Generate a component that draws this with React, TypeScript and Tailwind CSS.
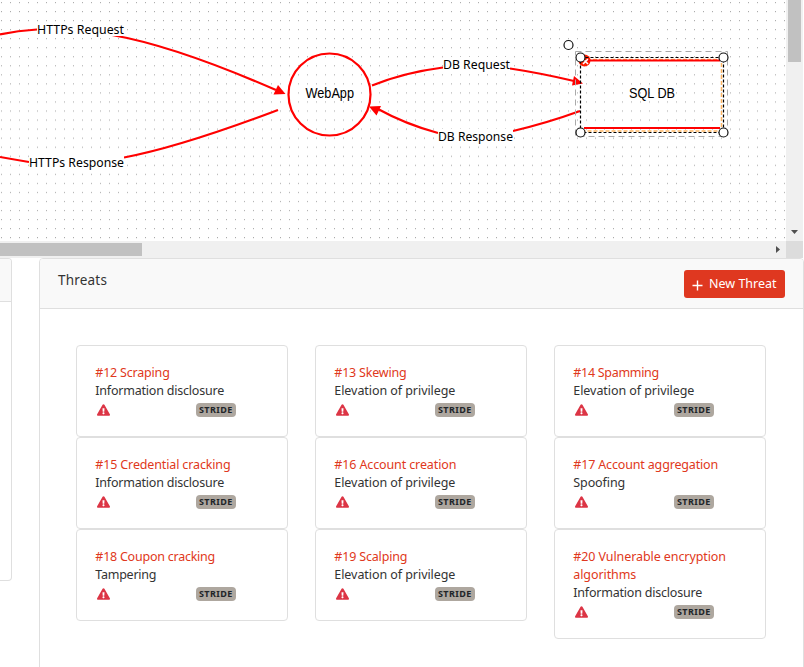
import React from "react";

type Threat = { title: string; kind: string; tracking: string };

const kindTracking: Record<string, string> = {
  "Information disclosure": "tracking-[-0.21px]",
  "Elevation of privilege": "tracking-[-0.06px]",
  Spoofing: "tracking-[-0.1px]",
  Tampering: "tracking-[-0.26px]",
};

const threats: Threat[] = [
  { title: "#12 Scraping", kind: "Information disclosure", tracking: "tracking-[-0.2px]" },
  { title: "#13 Skewing", kind: "Elevation of privilege", tracking: "tracking-[-0.2px]" },
  { title: "#14 Spamming", kind: "Elevation of privilege", tracking: "tracking-[-0.3px]" },
  { title: "#15 Credential cracking", kind: "Information disclosure", tracking: "tracking-[-0.14px]" },
  { title: "#16 Account creation", kind: "Elevation of privilege", tracking: "tracking-[-0.12px]" },
  { title: "#17 Account aggregation", kind: "Spoofing", tracking: "tracking-[-0.16px]" },
  { title: "#18 Coupon cracking", kind: "Tampering", tracking: "tracking-[-0.24px]" },
  { title: "#19 Scalping", kind: "Elevation of privilege", tracking: "tracking-[-0.17px]" },
  { title: "#20 Vulnerable encryption algorithms", kind: "Information disclosure", tracking: "tracking-[-0.09px]" },
];

function WarningIcon() {
  return (
    <svg width="13" height="12" viewBox="0 0 576 512" className="ml-[2px] mt-[4px] text-[#dc3545]">
      <path fill="currentColor" d="M569.517 440.013C587.975 472.007 564.806 512 527.94 512H48.054c-36.937 0-59.999-40.055-41.577-71.987L246.423 23.985c18.467-32.009 64.72-31.951 83.154 0l239.94 416.028zM288 354c-25.405 0-46 20.595-46 46s20.595 46 46 46 46-20.595 46-46-20.595-46-46-46zm-43.673-165.346l7.418 136c.347 6.364 5.609 11.346 11.982 11.346h48.546c6.373 0 11.635-4.982 11.982-11.346l7.418-136c.375-6.874-5.098-12.654-11.982-12.654h-63.383c-6.884 0-12.356 5.78-11.981 12.654z" />
    </svg>
  );
}

function ThreatCard({ threat }: { threat: Threat }) {
  return (
    <article className="w-[212px] self-start rounded-[4px] border border-[#dfdfdf] bg-white px-[18px] py-[18px] text-[12.5px] leading-[18px]">
      <p className={`pl-[0.3px] text-[#df3820] ${threat.tracking}`}>{threat.title}</p>
      <p className={`pl-[0.3px] text-[#333] ${kindTracking[threat.kind]}`}>{threat.kind}</p>
      <div className="flex h-[18px] items-start">
        <WarningIcon />
        <span className="ml-[86px] mt-[3px] h-[14px] w-[40px] rounded-[4px] bg-[#aea79f] pl-[3px] text-[9px] font-bold leading-[14px] tracking-[0.4px] text-[#212529]">
          STRIDE
        </span>
      </div>
    </article>
  );
}

function Handle({ x, y }: { x: number; y: number }) {
  return <circle cx={x} cy={y} r="4.5" fill="#fff" stroke="#111" strokeWidth="1.2" />;
}

function Diagram() {
  const label = { fontSize: 13, fill: "#000", lengthAdjust: "spacingAndGlyphs" as const };
  return (
    <svg width="786" height="241" className="block bg-white">
      <defs>
        <pattern id="grid" x="1" y="2" width="9" height="9.04" patternUnits="userSpaceOnUse">
          <rect width="1" height="1.1" fill="#aaa" />
        </pattern>
      </defs>
      <rect width="786" height="241" fill="url(#grid)" />
      <g fill="none" stroke="#f00" strokeWidth="2.2">
        <path d="M0 34.5Q18 30.5 37 29.5M112 35Q175 46 276 90" />
        <path d="M0 157Q14 159.5 29 162M124 157.5Q180 147 278 110" />
        <path d="M372 85.500Q404 72.500 443 67.500M510 68.500Q540 73 574 81" />
        <path d="M378 109Q405 124 438 133M513 131Q547 123 580 111" />
        <circle cx="329.500" cy="94.500" r="41" />
      </g>
      <g fill="#f00">
        <path d="M285.500 94L273.500 94.500L278 85Z" />
        <path d="M369 106.500L381 106L376.500 115.500Z" />
        <path d="M583 83.500L572 85.500L574 76Z" />
      </g>
      <g fill="#fff">
        <rect x="37" y="22" width="87" height="14" />
        <rect x="29" y="155" width="95" height="14" />
        <rect x="443" y="57" width="67" height="14" />
        <rect x="438" y="129" width="75" height="14" />
      </g>
      <g>
        <text x="37" y="34" textLength="87" {...label}>HTTPs Request</text>
        <text x="29" y="167" textLength="95" {...label}>HTTPs Response</text>
        <text x="443" y="69" textLength="67" {...label}>DB Request</text>
        <text x="438" y="141" textLength="75" {...label}>DB Response</text>
      </g>
      <g className="font-['Liberation_Sans',sans-serif]" fill="#000" fontSize="14">
        <text x="305.500" y="98" textLength="48.500" lengthAdjust="spacingAndGlyphs">WebApp</text>
        <text x="629" y="98" textLength="46" lengthAdjust="spacingAndGlyphs">SQL DB</text>
      </g>
      <rect x="575.500" y="51.500" width="152" height="85" fill="none" stroke="#aaa" strokeDasharray="6 4" />
      <path d="M581 59.500H721.500V131H581" fill="none" stroke="#feb663" strokeWidth="1.500" strokeDasharray="4 2" />
      <circle cx="584.500" cy="60.500" r="6" fill="#ff1d00" />
      <path d="M583 59L588 64M588 59L583 64" stroke="#fff" strokeWidth="1.600" />
      <path d="M588 60.500H720M584 128H720" stroke="#f00" strokeWidth="2.200" />
      <rect x="580.500" y="57.500" width="143" height="75" fill="none" stroke="#000" strokeWidth="1.200" strokeDasharray="3 2" />
      <Handle x={568.5} y={45} />
      <Handle x={580.5} y={57.5} />
      <Handle x={723.5} y={57.5} />
      <Handle x={580.5} y={132.5} />
      <Handle x={723.5} y={132.5} />
    </svg>
  );
}

export default function App() {
  return (
    <main className="flex h-[667px] w-[804px] flex-col overflow-hidden bg-white font-['Noto_Sans',sans-serif]">
      <section className="h-[258px] shrink-0">
        <div className="flex h-[241px]">
          <Diagram />
          <div className="flex w-[17px] flex-col items-center justify-between bg-[#f0f0f0]">
            <div className="h-[62px] w-[13px] bg-[#c1c1c1]" />
            <svg width="7" height="4" className="mb-[7px]"><path d="M0 0H7L3.500 4Z" fill="#505050" /></svg>
          </div>
        </div>
        <div className="flex h-[17px] w-[803px] items-center bg-[#f0f0f0]">
          <div className="h-[13px] w-[142px] bg-[#c1c1c1]" />
          <svg width="4" height="7" className="ml-auto mr-[6px]"><path d="M0 0V7L4 3.500Z" fill="#505050" /></svg>
          <div className="h-[17px] w-[17px] bg-[#dcdcdc]" />
        </div>
      </section>
      <div className="flex min-h-0 flex-1">
        <aside className="h-[323px] w-[12px] shrink-0 rounded-r-[4px] border border-l-0 border-[#dfdfdf]">
          <div className="h-[43px] rounded-tr-[3px] border-b border-[#dfdfdf] bg-[#f9f9f9]" />
        </aside>
        <section className="ml-[27px] h-[460px] w-[765px] shrink-0 rounded-[4px] border border-[#dfdfdf]">
          <header className="flex h-[50px] items-start justify-between rounded-t-[3px] border-b border-[#dfdfdf] bg-[#f9f9f9] pl-[18px] pr-[18px]">
            <h2 className="mt-[10px] text-[13.5px] leading-[22px] tracking-[0.2px] text-[#333]">Threats</h2>
            <button className="mt-[11px] flex h-[28px] w-[101px] items-start rounded-[3px] bg-[#df3820] text-[12.5px] leading-[18px] text-white">
              <svg width="11" height="11" className="ml-[8px] mt-[10px]"><path d="M5.500 0.500V10.500M0.500 5.500H10.500" stroke="currentColor" strokeWidth="1.400" /></svg>
              <span className="ml-[6px] mt-[5px] whitespace-nowrap">New Threat</span>
            </button>
          </header>
          <div className="grid grid-cols-[212px_212px_212px] gap-x-[27px] pl-[36px] pt-[36px]">
            {threats.map((t) => <ThreatCard key={t.title} threat={t} />)}
          </div>
        </section>
      </div>
    </main>
  );
}
